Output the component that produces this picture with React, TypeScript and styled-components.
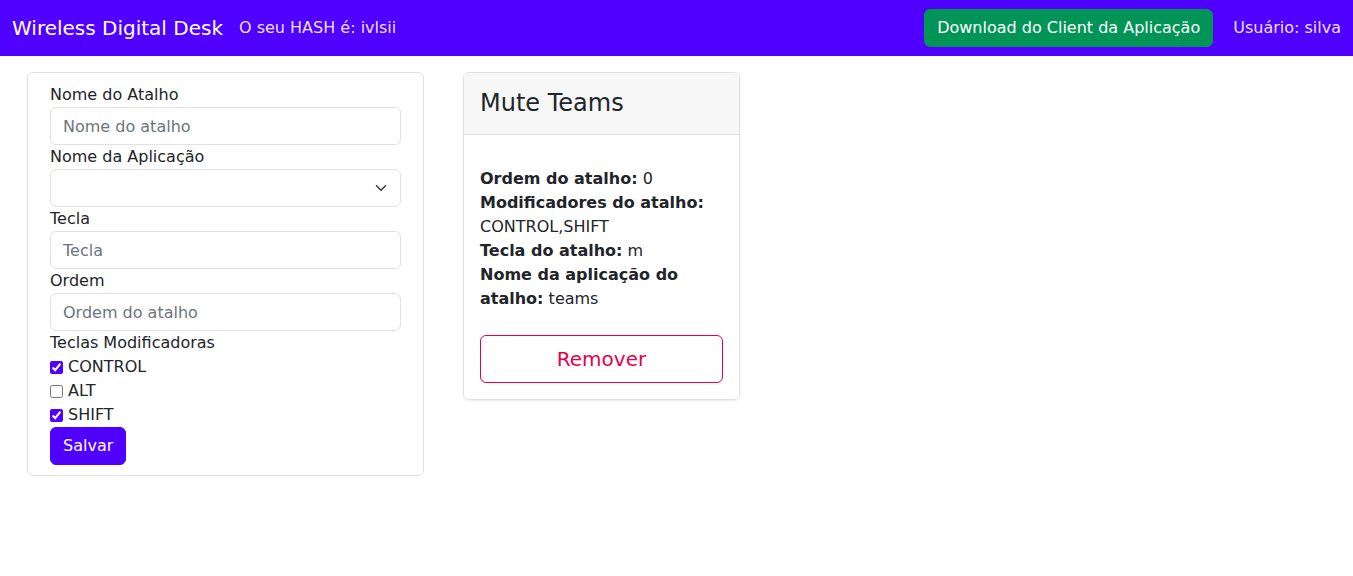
import React from "react";
import styled, { createGlobalStyle } from "styled-components";

const Global = createGlobalStyle`
  * { box-sizing: border-box; }
  body {
    margin: 0;
    font-family: "DejaVu Sans", sans-serif;
    font-size: 16px;
    line-height: 1.5;
    color: #212529;
    background: #fff;
  }
`;

const Navbar = styled.nav`
  height: 56px;
  background: #5000ff;
  display: flex;
  align-items: center;
  padding: 0 12px;
`;

const Brand = styled.span`
  font-size: 20px;
  line-height: 30px;
  color: #fff;
  margin-right: 16px;
`;

const NavText = styled.span`
  color: rgba(255, 255, 255, 0.9);
  font-size: 16px;
`;

const Spacer = styled.div`
  flex: 1;
`;

const DownloadButton = styled.button`
  font-family: inherit;
  font-size: 16px;
  line-height: 24px;
  padding: 6px 12px;
  background: #009557;
  color: #fff;
  border: 1px solid #009557;
  border-radius: 6px;
  margin-right: 20px;
  cursor: pointer;
`;

const Main = styled.main`
  display: flex;
  align-items: flex-start;
  gap: 39px;
  padding: 16px 0 0 27px;
`;

const FormCard = styled.form`
  width: 397px;
  border: 1px solid #dee2e6;
  border-radius: 6px;
  padding: 10px 22px 10px 22px;
  display: flex;
  flex-direction: column;
`;

const Label = styled.label`
  display: block;
  line-height: 24px;
`;

const Input = styled.input`
  display: block;
  width: 100%;
  height: 38px;
  padding: 6px 12px;
  font-family: inherit;
  font-size: 16px;
  line-height: 24px;
  color: #212529;
  border: 1px solid #dee2e6;
  border-radius: 6px;
  outline: none;
  &::placeholder {
    color: #6c757d;
  }
`;

const SelectWrap = styled.div`
  position: relative;
`;

const Select = styled.select`
  display: block;
  width: 100%;
  height: 38px;
  padding: 6px 36px 6px 12px;
  font-family: inherit;
  font-size: 16px;
  appearance: none;
  background: #fff;
  border: 1px solid #dee2e6;
  border-radius: 6px;
  outline: none;
`;

const Chevron = styled.svg`
  position: absolute;
  right: 12px;
  top: 13px;
  pointer-events: none;
`;

const CheckRow = styled.label`
  display: flex;
  align-items: center;
  gap: 5px;
  line-height: 24px;
`;

const Check = styled.input`
  margin: 0;
  width: 13px;
  height: 13px;
  accent-color: #5000ff;
`;

const SaveButton = styled.button`
  align-self: flex-start;
  font-family: inherit;
  font-size: 16px;
  line-height: 24px;
  padding: 6px 12px;
  background: #5000ff;
  color: #fff;
  border: 1px solid #5000ff;
  border-radius: 6px;
  cursor: pointer;
`;

const Card = styled.div`
  width: 277px;
  border: 1px solid #dee2e6;
  border-radius: 6px;
  box-shadow: 0 1px 3px rgba(0, 0, 0, 0.08);
  overflow: hidden;
`;

const CardHeader = styled.div`
  background: #f7f7f7;
  border-bottom: 1px solid #dee2e6;
  padding: 16px;
`;

const CardTitle = styled.h4`
  margin: 0;
  font-size: 24px;
  font-weight: 400;
  line-height: 28.8px;
`;

const CardBody = styled.div`
  padding: 16px;
`;

const Info = styled.p`
  margin: 16px 0 24px;
  line-height: 24px;
`;

const RemoveButton = styled.button`
  display: block;
  width: 100%;
  height: 48px;
  font-family: inherit;
  font-size: 20px;
  background: #fff;
  color: #e8004a;
  border: 1px solid #e8004a;
  border-radius: 6px;
  cursor: pointer;
`;

export default function App() {
  return (
    <>
      <Global />
      <Navbar>
        <Brand>Wireless Digital Desk</Brand>
        <NavText>O seu HASH é: ivlsii</NavText>
        <Spacer />
        <DownloadButton type="button">Download do Client da Aplicação</DownloadButton>
        <NavText>Usuário: silva</NavText>
      </Navbar>
      <Main>
        <FormCard onSubmit={(e) => e.preventDefault()}>
          <Label>Nome do Atalho</Label>
          <Input placeholder="Nome do atalho" />
          <Label>Nome da Aplicação</Label>
          <SelectWrap>
            <Select defaultValue="">
              <option value=""></option>
            </Select>
            <Chevron width="16" height="12" viewBox="0 0 16 16">
              <path
                d="m2 5 6 6 6-6"
                fill="none"
                stroke="#343a40"
                strokeWidth="2"
                strokeLinecap="round"
                strokeLinejoin="round"
              />
            </Chevron>
          </SelectWrap>
          <Label>Tecla</Label>
          <Input placeholder="Tecla" />
          <Label>Ordem</Label>
          <Input placeholder="Ordem do atalho" />
          <Label>Teclas Modificadoras</Label>
          <CheckRow>
            <Check type="checkbox" defaultChecked />
            CONTROL
          </CheckRow>
          <CheckRow>
            <Check type="checkbox" />
            ALT
          </CheckRow>
          <CheckRow>
            <Check type="checkbox" defaultChecked />
            SHIFT
          </CheckRow>
          <SaveButton type="submit">Salvar</SaveButton>
        </FormCard>
        <Card>
          <CardHeader>
            <CardTitle>Mute Teams</CardTitle>
          </CardHeader>
          <CardBody>
            <Info>
              <b>Ordem do atalho:</b> 0
              <br />
              <b>Modificadores do atalho:</b> CONTROL,SHIFT
              <br />
              <b>Tecla do atalho:</b> m
              <br />
              <b>Nome da aplicação do atalho:</b> teams
            </Info>
            <RemoveButton type="button">Remover</RemoveButton>
          </CardBody>
        </Card>
      </Main>
    </>
  );
}
